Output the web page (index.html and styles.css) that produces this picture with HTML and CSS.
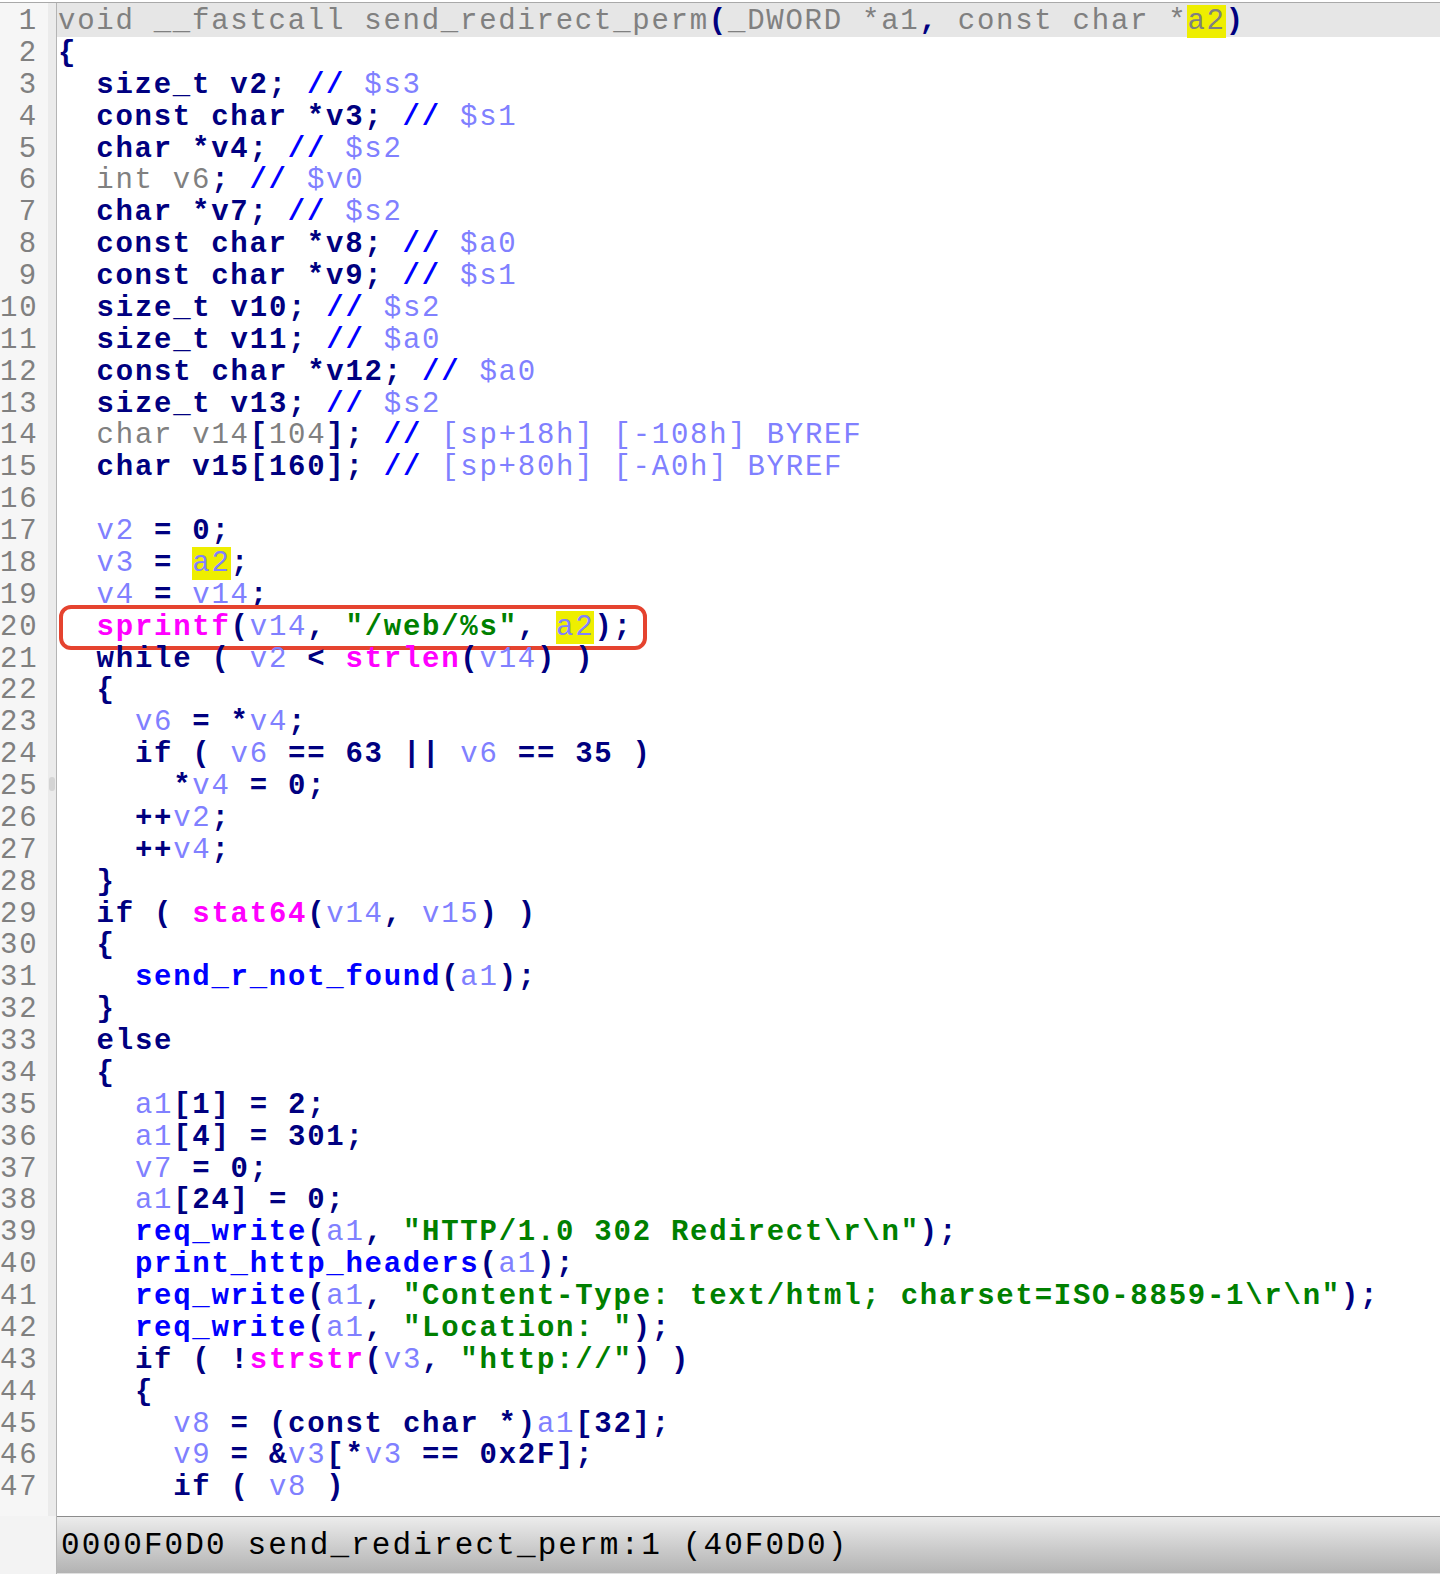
FILE: index.html
```html
<!DOCTYPE html>
<html>
<head>
<meta charset="utf-8">
<link rel="stylesheet" href="styles.css">
</head>
<body>
<div class="window">
  <div class="editor">
    <div class="row"><span class="ln">1</span><span class="code cur"><span class="g">void __fastcall send_redirect_perm</span><span class="k">(</span><span class="g">_DWORD *a1</span><span class="k">,</span><span class="g"> const char *</span><span class="g h">a2</span><span class="k">)</span></span></div>
    <div class="row"><span class="ln">2</span><span class="code"><span class="k">{</span></span></div>
    <div class="row"><span class="ln">3</span><span class="code">  <span class="k">size_t v2; </span><span class="c">//</span><span class="v"> $s3</span></span></div>
    <div class="row"><span class="ln">4</span><span class="code">  <span class="k">const char *v3; </span><span class="c">//</span><span class="v"> $s1</span></span></div>
    <div class="row"><span class="ln">5</span><span class="code">  <span class="k">char *v4; </span><span class="c">//</span><span class="v"> $s2</span></span></div>
    <div class="row"><span class="ln">6</span><span class="code">  <span class="g">int v6</span><span class="k">; </span><span class="c">//</span><span class="v"> $v0</span></span></div>
    <div class="row"><span class="ln">7</span><span class="code">  <span class="k">char *v7; </span><span class="c">//</span><span class="v"> $s2</span></span></div>
    <div class="row"><span class="ln">8</span><span class="code">  <span class="k">const char *v8; </span><span class="c">//</span><span class="v"> $a0</span></span></div>
    <div class="row"><span class="ln">9</span><span class="code">  <span class="k">const char *v9; </span><span class="c">//</span><span class="v"> $s1</span></span></div>
    <div class="row"><span class="ln">10</span><span class="code">  <span class="k">size_t v10; </span><span class="c">//</span><span class="v"> $s2</span></span></div>
    <div class="row"><span class="ln">11</span><span class="code">  <span class="k">size_t v11; </span><span class="c">//</span><span class="v"> $a0</span></span></div>
    <div class="row"><span class="ln">12</span><span class="code">  <span class="k">const char *v12; </span><span class="c">//</span><span class="v"> $a0</span></span></div>
    <div class="row"><span class="ln">13</span><span class="code">  <span class="k">size_t v13; </span><span class="c">//</span><span class="v"> $s2</span></span></div>
    <div class="row"><span class="ln">14</span><span class="code">  <span class="g">char v14</span><span class="k">[</span><span class="g">104</span><span class="k">]; </span><span class="c">//</span><span class="v"> [sp+18h] [-108h] BYREF</span></span></div>
    <div class="row"><span class="ln">15</span><span class="code">  <span class="k">char v15[160]; </span><span class="c">//</span><span class="v"> [sp+80h] [-A0h] BYREF</span></span></div>
    <div class="row"><span class="ln">16</span><span class="code"></span></div>
    <div class="row"><span class="ln">17</span><span class="code">  <span class="v">v2</span><span class="k"> = 0;</span></span></div>
    <div class="row"><span class="ln">18</span><span class="code">  <span class="v">v3</span><span class="k"> = </span><span class="v h">a2</span><span class="k">;</span></span></div>
    <div class="row"><span class="ln">19</span><span class="code">  <span class="v">v4</span><span class="k"> = </span><span class="v">v14</span><span class="k">;</span></span></div>
    <div class="row"><span class="ln">20</span><span class="code">  <span class="l">sprintf</span><span class="k">(</span><span class="v">v14</span><span class="k">, </span><span class="s">"/web/%s"</span><span class="k">, </span><span class="v h">a2</span><span class="k">);</span></span><span class="mark"></span></div>
    <div class="row"><span class="ln">21</span><span class="code">  <span class="k">while ( </span><span class="v">v2</span><span class="k"> &lt; </span><span class="l">strlen</span><span class="k">(</span><span class="v">v14</span><span class="k">) )</span></span></div>
    <div class="row"><span class="ln">22</span><span class="code">  <span class="k">{</span></span></div>
    <div class="row"><span class="ln">23</span><span class="code">    <span class="v">v6</span><span class="k"> = *</span><span class="v">v4</span><span class="k">;</span></span></div>
    <div class="row"><span class="ln">24</span><span class="code">    <span class="k">if ( </span><span class="v">v6</span><span class="k"> == 63 || </span><span class="v">v6</span><span class="k"> == 35 )</span></span></div>
    <div class="row"><span class="ln thumb">25</span><span class="code">      <span class="k">*</span><span class="v">v4</span><span class="k"> = 0;</span></span></div>
    <div class="row"><span class="ln">26</span><span class="code">    <span class="k">++</span><span class="v">v2</span><span class="k">;</span></span></div>
    <div class="row"><span class="ln">27</span><span class="code">    <span class="k">++</span><span class="v">v4</span><span class="k">;</span></span></div>
    <div class="row"><span class="ln">28</span><span class="code">  <span class="k">}</span></span></div>
    <div class="row"><span class="ln">29</span><span class="code">  <span class="k">if ( </span><span class="l">stat64</span><span class="k">(</span><span class="v">v14</span><span class="k">, </span><span class="v">v15</span><span class="k">) )</span></span></div>
    <div class="row"><span class="ln">30</span><span class="code">  <span class="k">{</span></span></div>
    <div class="row"><span class="ln">31</span><span class="code">    <span class="f">send_r_not_found</span><span class="k">(</span><span class="v">a1</span><span class="k">);</span></span></div>
    <div class="row"><span class="ln">32</span><span class="code">  <span class="k">}</span></span></div>
    <div class="row"><span class="ln">33</span><span class="code">  <span class="k">else</span></span></div>
    <div class="row"><span class="ln">34</span><span class="code">  <span class="k">{</span></span></div>
    <div class="row"><span class="ln">35</span><span class="code">    <span class="v">a1</span><span class="k">[1] = 2;</span></span></div>
    <div class="row"><span class="ln">36</span><span class="code">    <span class="v">a1</span><span class="k">[4] = 301;</span></span></div>
    <div class="row"><span class="ln">37</span><span class="code">    <span class="v">v7</span><span class="k"> = 0;</span></span></div>
    <div class="row"><span class="ln">38</span><span class="code">    <span class="v">a1</span><span class="k">[24] = 0;</span></span></div>
    <div class="row"><span class="ln">39</span><span class="code">    <span class="f">req_write</span><span class="k">(</span><span class="v">a1</span><span class="k">, </span><span class="s">"HTTP/1.0 302 Redirect\r\n"</span><span class="k">);</span></span></div>
    <div class="row"><span class="ln">40</span><span class="code">    <span class="f">print_http_headers</span><span class="k">(</span><span class="v">a1</span><span class="k">);</span></span></div>
    <div class="row"><span class="ln">41</span><span class="code">    <span class="f">req_write</span><span class="k">(</span><span class="v">a1</span><span class="k">, </span><span class="s">"Content-Type: text/html; charset=ISO-8859-1\r\n"</span><span class="k">);</span></span></div>
    <div class="row"><span class="ln">42</span><span class="code">    <span class="f">req_write</span><span class="k">(</span><span class="v">a1</span><span class="k">, </span><span class="s">"Location: "</span><span class="k">);</span></span></div>
    <div class="row"><span class="ln">43</span><span class="code">    <span class="k">if ( !</span><span class="l">strstr</span><span class="k">(</span><span class="v">v3</span><span class="k">, </span><span class="s">"http://"</span><span class="k">) )</span></span></div>
    <div class="row"><span class="ln">44</span><span class="code">    <span class="k">{</span></span></div>
    <div class="row"><span class="ln">45</span><span class="code">      <span class="v">v8</span><span class="k"> = (const char *)</span><span class="v">a1</span><span class="k">[32];</span></span></div>
    <div class="row"><span class="ln">46</span><span class="code">      <span class="v">v9</span><span class="k"> = &amp;</span><span class="v">v3</span><span class="k">[*</span><span class="v">v3</span><span class="k"> == 0x2F];</span></span></div>
    <div class="row"><span class="ln">47</span><span class="code">      <span class="k">if ( </span><span class="v">v8</span><span class="k"> )</span></span></div>
  </div>
  <div class="footer">
    <div class="foot-gutter"></div>
    <div class="status">0000F0D0 send_redirect_perm:1 (40F0D0)</div>
  </div>
</div>
</body>
</html>
```

FILE: styles.css
```css
html, body {
  margin: 0;
  padding: 0;
  background: #ffffff;
}

.window {
  height: 1574px;
  display: flex;
  flex-direction: column;
  padding-top: 2px;
  box-sizing: border-box;
}

.editor {
  flex: 1;
  border-top: 1px solid #a9a9a9;
  background: linear-gradient(to right, #f6f6f6 0, #f6f6f6 48px, #ebebeb 48px, #ebebeb 56px, #b4b4b4 56px, #b4b4b4 57px, #ffffff 57px);
  font-family: "Liberation Mono", monospace;
  font-size: 29px;
  letter-spacing: 1.74px;
}

.row {
  position: relative;
  display: flex;
  height: 31.88px;
  line-height: 31.88px;
}

.ln {
  flex: 0 0 57px;
  box-sizing: border-box;
  text-align: right;
  padding-right: 19px;
  padding-top: 3px;
  color: #808080;
  font-weight: normal;
  white-space: pre;
}

.ln.thumb {
  position: relative;
}

.ln.thumb::after {
  content: "";
  position: absolute;
  left: 49px;
  top: 9px;
  width: 6px;
  height: 14px;
  border-radius: 3px;
  background: #d4d4d4;
}

.code {
  flex: 1;
  box-sizing: border-box;
  padding-left: 1px;
  padding-top: 3px;
  white-space: pre;
  font-weight: bold;
  color: #000080;
}

.code.cur {
  background: #e6e6e6;
  height: 33.5px;
}

.k { color: #000080; font-weight: bold; }
.g { color: #808080; font-weight: normal; }
.v { color: #8080ff; font-weight: normal; }
.c { color: #0000ff; font-weight: bold; }
.f { color: #0000ff; font-weight: bold; }
.l { color: #ff00ff; font-weight: bold; }
.s { color: #008000; font-weight: bold; }
.h { background: #eeee00; }

.mark {
  position: absolute;
  left: 59px;
  top: -4px;
  width: 588px;
  height: 45px;
  box-sizing: border-box;
  border: 4px solid #e5432f;
  border-radius: 12px;
}

.footer {
  display: flex;
  height: 58px;
  flex: 0 0 58px;
}

.foot-gutter {
  flex: 0 0 56px;
  background: #f3f3f3;
  border-right: 1px solid #b4b4b4;
}

.status {
  flex: 1;
  border-top: 1px solid #8c8c8c;
  border-bottom: 1px solid #e0e0e0;
  background: linear-gradient(to bottom, #ececec, #c9c9c9 60%, #b3b3b3);
  font-family: "Liberation Mono", monospace;
  font-size: 31px;
  letter-spacing: 2.12px;
  color: #000000;
  line-height: 54px;
  padding-top: 2px;
  box-sizing: border-box;
  padding-left: 4px;
  white-space: pre;
}
```
